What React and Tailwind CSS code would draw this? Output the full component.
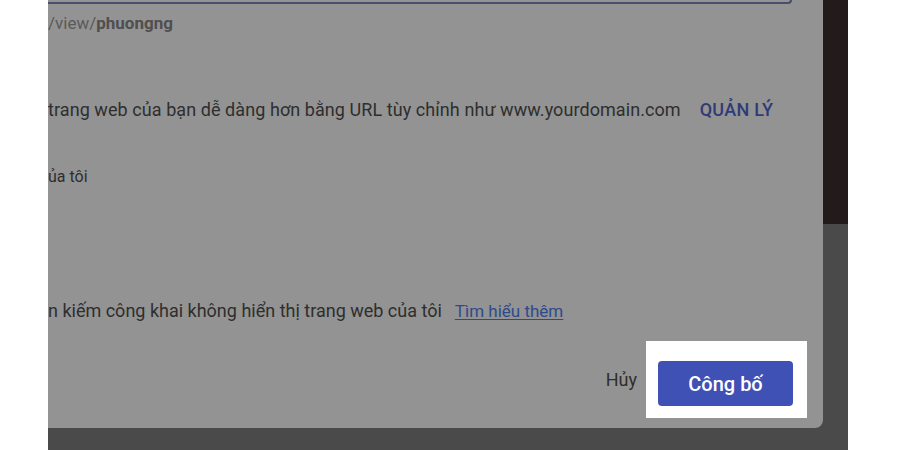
export default function App() {
  return (
    <div
      className="flex w-[900px] h-[450px] bg-white overflow-hidden"
      style={{ fontFamily: "Roboto, 'Noto Sans', sans-serif" }}
    >
      <div className="w-[48px] shrink-0 bg-white" />

      <div className="w-[800px] shrink-0 flex flex-col bg-[#4a4a4a]">
        <div className="flex h-[428px]">
          {/* dialog */}
          <div className="w-[775px] h-full bg-[#939393] rounded-br-[8px] overflow-hidden flex flex-col">
            <div className="w-[744px] h-[4px] border-b-2 border-r-2 border-[#4a4e6e] rounded-br-[6px]" />

            <p className="mt-[8px] text-[17px] leading-[22px] text-[#5a5a5a] whitespace-nowrap">
              /view/<span className="font-bold text-[#4f4f4f]">phuongng</span>
            </p>

            <div className="mt-[64px] flex items-center whitespace-nowrap">
              <span className="text-[18px] leading-[24px] text-[#2e2e2e] tracking-[0.07px]">
                trang web của bạn dễ dàng hơn bằng URL tùy chỉnh như www.yourdomain.com
              </span>
              <span className="ml-[19px] text-[18px] leading-[24px] font-medium text-[#2f3b78] tracking-[0.3px]">
                QUẢN LÝ
              </span>
            </div>

            <p className="mt-[43px] text-[16px] leading-[24px] text-[#2e2e2e] whitespace-nowrap">
              ủa tôi
            </p>

            <div className="mt-[110px] flex items-center whitespace-nowrap">
              <span className="text-[18px] leading-[24px] text-[#2e2e2e]">
                n kiếm công khai không hiển thị trang web của tôi
              </span>
              <a className="ml-[13px] text-[17px] leading-[24px] text-[#2d4a8c] underline underline-offset-2">
                Tìm hiểu thêm
              </a>
            </div>

            <div className="mt-[18px] flex items-center justify-end pr-[16px]">
              <button className="text-[18px] text-[#2e2e2e] mr-[9px]">
                Hủy
              </button>
              <div className="bg-white pt-[20px] pb-[12px] pl-[12px] pr-[14px]">
                <button className="w-[135px] h-[45px] rounded-[4px] bg-[#3f51b5] text-white text-[20px] font-medium">
                  Công bố
                </button>
              </div>
            </div>
          </div>

          {/* backdrop strip */}
          <div className="w-[25px] flex flex-col">
            <div className="h-[224px] bg-[#231b1b]" />
            <div className="flex-1 bg-[#4a4a4a]" />
          </div>
        </div>
      </div>

      <div className="flex-1 bg-white" />
    </div>
  );
}
